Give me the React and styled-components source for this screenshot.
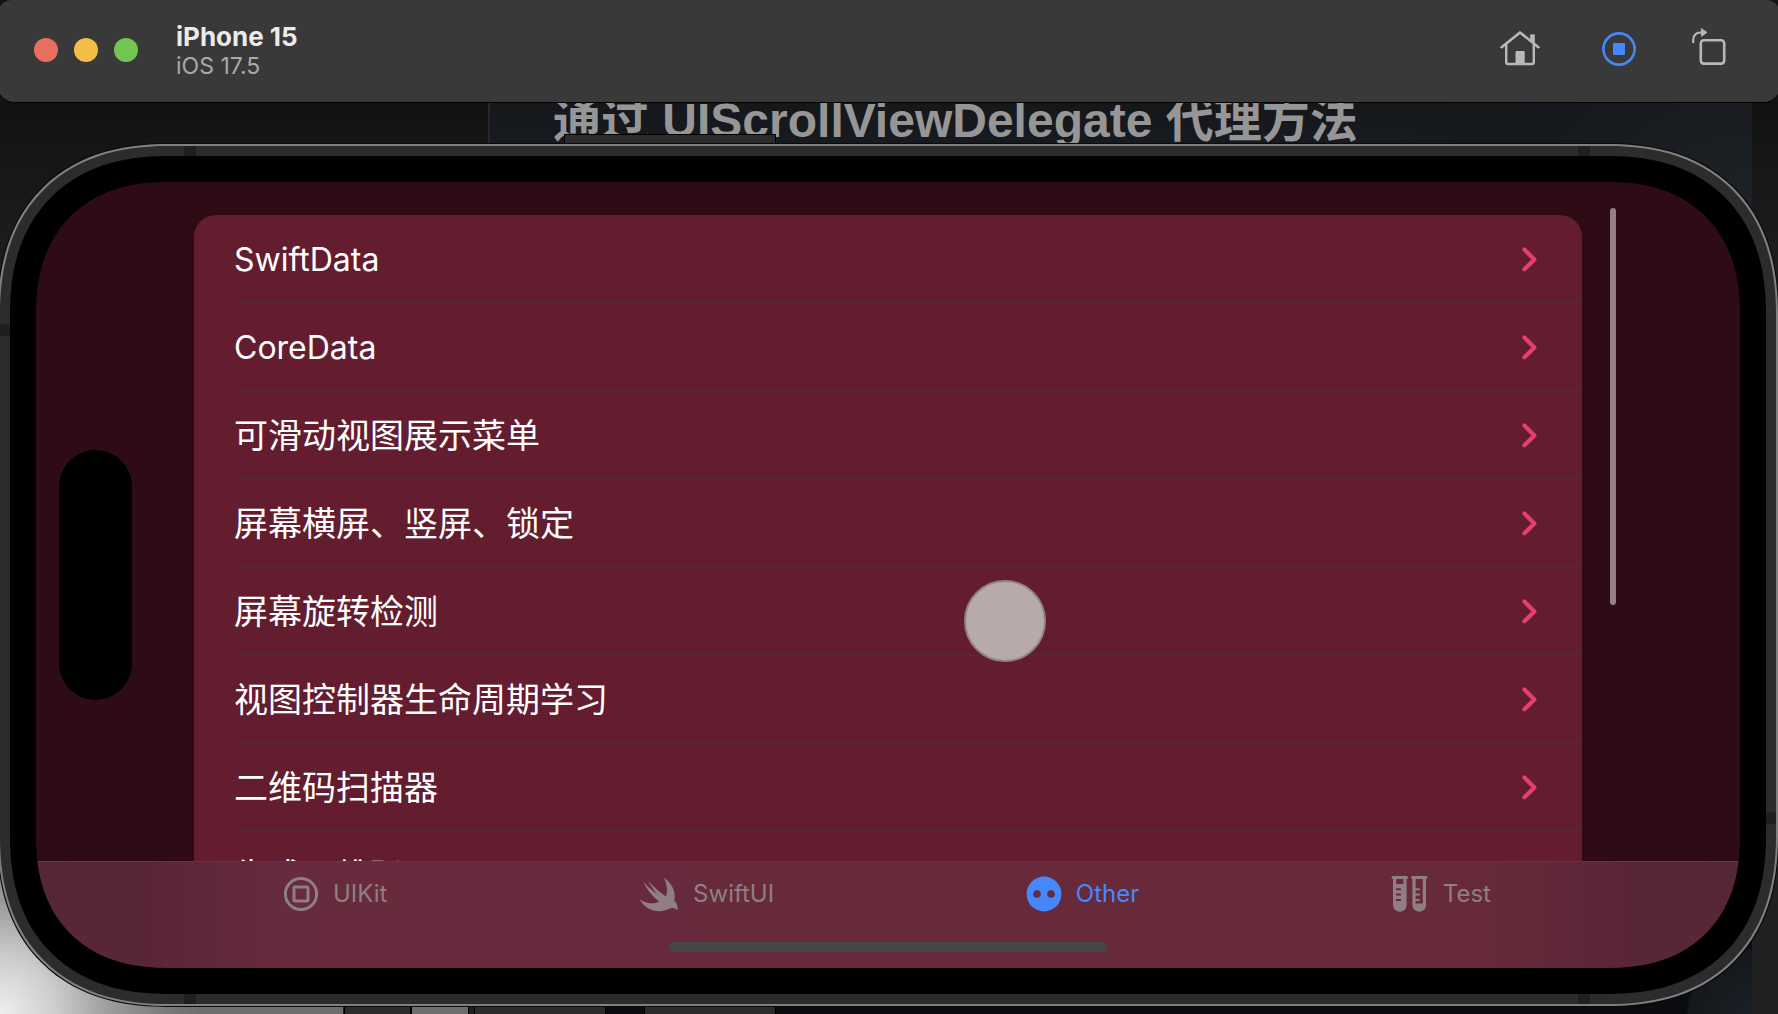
import React from "react";
import styled, { createGlobalStyle, css } from "styled-components";

const GlobalStyle = createGlobalStyle`
  *, *::before, *::after { box-sizing: border-box; }
  html, body { margin: 0; background: #141414; }
  body {
    font-family: Inter, "Noto Sans CJK SC", sans-serif;
    overflow: hidden;
  }
  button { border: 0; padding: 0; background: none; font: inherit; color: inherit; }
  svg { display: block; overflow: visible; }
`;

const Page = styled.div`
  display: flex;
  flex-direction: column;
  height: 100vh;
  overflow: hidden;
  background: #141414;
`;

const TitleBar = styled.header`
  display: flex;
  align-items: center;
  height: 102px;
  flex: none;
  margin: 0 -2px;
  padding: 0 55px 2px 36px;
  background: #393939;
  border-radius: 14px 14px 16px 16px;
  box-shadow: 0 1px 0 #000;
  position: relative;
  z-index: 1;
`;

const Lights = styled.div`
  display: flex;
  gap: 16px;
  margin-right: 38px;
`;

const Light = styled.button`
  width: 24px;
  height: 24px;
  border-radius: 50%;
  background: ${(p) => p.$color};
`;

const Titles = styled.div`
  flex: 1;
  padding-top: 2px;
`;

const DeviceName = styled.h1`
  margin: 0;
  font-size: 26px;
  line-height: 30px;
  font-weight: 700;
  color: #ebebeb;
`;

const DeviceOs = styled.p`
  margin: 0;
  font-size: 23px;
  line-height: 28px;
  color: #a9a9a9;
`;

const Tools = styled.div`
  display: flex;
  align-items: center;
  gap: 54px;
  padding-bottom: 4px;
`;

const ToolButton = styled.button`
  display: flex;
  justify-content: center;
  width: ${(p) => p.$width}px;
  height: 40px;
  color: ${(p) => (p.$active ? "#4688fb" : "#b8b8b8")};
`;

const Desktop = styled.main`
  position: relative;
  flex: 1;
  min-height: 0;
  display: flex;
  padding: 42px 0 8px;
  overflow: hidden;
`;

const Backdrop = styled.div`
  position: absolute;
  inset: 0;
  background: linear-gradient(#111 0, #151515 40px, #202020 200px);
`;

const Editor = styled.section`
  position: absolute;
  inset: 0 26px 0 488px;
  border-left: 2px solid #24272c;
  background:
    radial-gradient(circle at 100% 180px, #20262c 0, #15181c 260px, transparent 400px),
    radial-gradient(circle at 100% 100%, #1b2026 0, #14181c 63px, transparent 66px),
    linear-gradient(#15171b, #171a1f 40px, #0a0c10 200px);
`;

const EditorHeading = styled.h2`
  position: absolute;
  top: -9px;
  left: 63px;
  margin: 0;
  white-space: nowrap;
  font-family: "Liberation Sans", "Noto Sans CJK SC", sans-serif;
  font-size: 48px;
  line-height: 56px;
  font-weight: 700;
  color: #969696;
`;

const Paper = styled.div`
  position: absolute;
  left: 0;
  bottom: 0;
  width: 343px;
  height: 250px;
  background: radial-gradient(
    circle at 0 100%,
    #efefef 0,
    #cecece 55px,
    #9c9c9c 110px,
    #787878 170px,
    #6e6e6e 200px
  );
`;

const BackWindow = styled.div`
  position: absolute;
  left: ${(p) => p.$left}px;
  width: ${(p) => p.$width}px;
  height: 9px;
  background: ${(p) => p.$color || "#2c2c2c"};
  border: solid #000;
  border-width: 0 1px;
  ${(p) =>
    p.$top
      ? css`
          top: 32px;
          border-top-width: 1px;
        `
      : css`
          bottom: 0;
        `}
`;

const Phone = styled.section`
  position: relative;
  flex: 1;
  min-width: 0;
  display: flex;
  margin-left: -2px;
  padding: 10px;
  border: 2px solid #808080;
  background: #2c2c2c;
  border-radius: 158px;
  box-shadow: 0 0 0 1px #0a0a0a;
  @supports (corner-shape: squircle) {
    border-radius: 170px;
    corner-shape: superellipse(1.2);
  }
`;

const Antenna = styled.span`
  position: absolute;
  background: #1f1f1f;
  ${(p) =>
    p.$side === "left" || p.$side === "right"
      ? css`
          width: 10px;
          height: 12px;
          ${p.$side}: 0;
        `
      : css`
          width: 12px;
          height: 10px;
          ${p.$side}: 0;
        `}
  ${(p) => p.$from}: ${(p) => p.$at}px;
`;

const Bezel = styled.div`
  position: relative;
  flex: 1;
  min-width: 0;
  display: flex;
  padding: 26px;
  background: #000;
  border-radius: 146px;
  @supports (corner-shape: squircle) {
    border-radius: 158px;
    corner-shape: superellipse(1.2);
  }
`;

const Screen = styled.div`
  position: relative;
  flex: 1;
  min-width: 0;
  display: flex;
  flex-direction: column;
  overflow: hidden;
  background: #2f0c15;
  border-radius: 120px;
  @supports (corner-shape: squircle) {
    border-radius: 132px;
    corner-shape: superellipse(1.2);
  }
`;

const ListArea = styled.div`
  flex: 1;
  min-height: 0;
  padding: 33px 158px 0;
  overflow: hidden;
`;

const Card = styled.ul`
  margin: 0;
  padding: 1px 0 0 40px;
  list-style: none;
  background: #641d2e;
  border-radius: 22px;
`;

const Row = styled.li`
  height: 88px;
  border-bottom: 2px solid #592538;
`;

const RowLink = styled.a`
  display: flex;
  align-items: center;
  justify-content: space-between;
  height: 100%;
  padding: 2px 44px 0 0;
  color: #fff;
  text-decoration: none;
  font-size: ${(p) => (p.$latin ? 32 : 34)}px;
  line-height: 44px;
  white-space: nowrap;
`;

const Island = styled.div`
  position: absolute;
  left: 23px;
  top: 50%;
  width: 73px;
  height: 250px;
  margin-top: -125px;
  border-radius: 37px;
  background: #000;
`;

const ScrollThumb = styled.div`
  position: absolute;
  top: 26px;
  right: 124px;
  width: 6px;
  height: 397px;
  border-radius: 3px;
  background: #948088;
`;

const TouchDot = styled.div`
  position: absolute;
  left: 928px;
  top: 398px;
  width: 82px;
  height: 82px;
  border-radius: 50%;
  border: 2px solid #8f8587;
  background: #b8a9ab;
`;

const TabBar = styled.nav`
  flex: none;
  display: flex;
  flex-direction: column;
  align-items: center;
  justify-content: space-between;
  height: 107px;
  padding-bottom: 16px;
  border-top: 1px solid #6c3144;
  background: linear-gradient(90deg, #572635 0, #5a2636 7%, #672b3e 15%, #672a3b 50%, #672a3b 84%, #5a2636 93%, #572635 100%);
`;

const Tabs = styled.div`
  display: flex;
  justify-content: space-between;
  width: 100%;
  padding: 12px 249px 0 247px;
`;

const Tab = styled.button`
  display: flex;
  align-items: center;
  gap: 14px;
  height: 40px;
  font-size: 24px;
  line-height: 32px;
  color: ${(p) => (p.$active ? "#4688fb" : "#8f7f84")};
`;

const HomeIndicator = styled.div`
  width: 438px;
  height: 10px;
  border-radius: 5px;
  background: #474747;
`;

const HomeIcon = () => (
  <svg width="40" height="40" viewBox="0 0 40 40" fill="none" stroke="currentColor" strokeLinecap="round" strokeLinejoin="round">
    <path d="M1.6 19.2 20 4.4 38.4 19.2" strokeWidth="2.6" />
    <path d="M6.2 17v17a2 2 0 0 0 2 2h23.6a2 2 0 0 0 2-2V17" strokeWidth="2.4" />
    <path d="M30.8 6.8h3.6v9.6l-3.6-3z" fill="currentColor" strokeWidth="0.8" />
    <path d="M16.5 23h7.2a1 1 0 0 1 1 1v12h-9.2V24a1 1 0 0 1 1-1z" fill="currentColor" stroke="none" />
  </svg>
);

const StopIcon = () => (
  <svg width="40" height="40" viewBox="0 0 40 40" fill="none">
    <circle cx="20" cy="21" r="15.6" stroke="currentColor" strokeWidth="2.6" />
    <rect x="14" y="15" width="12" height="12" rx="1" fill="currentColor" />
  </svg>
);

const RotateIcon = () => (
  <svg width="32" height="40" viewBox="5 0 32 40" fill="none" stroke="currentColor">
    <rect x="12.8" y="12.2" width="23.4" height="23.4" rx="3" strokeWidth="2.6" />
    <path d="M5.2 14.2V11.5a7 7 0 0 1 7-7H14" strokeWidth="2.2" strokeLinecap="round" />
    <path d="M13.4.6 19 4.4l-5.6 4z" fill="currentColor" strokeWidth="0.8" strokeLinejoin="round" />
  </svg>
);

const Chevron = () => (
  <svg width="17" height="28" viewBox="0 0 17 28" fill="none" stroke="#e63d6d" strokeWidth="4.2" strokeLinecap="round" strokeLinejoin="round">
    <path d="M3.4 3.6 13.4 13.4 3.4 23.2" />
  </svg>
);

const UIKitIcon = () => (
  <svg width="36" height="36" viewBox="0 0 36 36" fill="none" stroke="currentColor">
    <circle cx="18" cy="18" r="15.6" strokeWidth="3" />
    <rect x="11" y="11" width="14" height="14" rx="1" strokeWidth="3" />
  </svg>
);

const SwiftIcon = () => (
  <svg width="40" height="36" viewBox="0 0 40 36" fill="currentColor">
    <path d="M24.6 1.4C33 7 37.3 16 35.4 24.6 38.4 28.2 39.2 32.4 38.2 34.6 36 31.4 33 31.4 30.4 32.8 21 37.6 7.6 35.4.6 23.4 7.4 27.6 15.4 28.6 20.2 25.6 13 20.2 8 13.6 4.6 6.2 9.6 11.6 14.6 15.6 18.2 18.2 14.6 13.8 11 8.8 9 5 14.6 10.8 21.2 16.6 27 20.4 29 13.8 28 7.6 24.6 1.4z" />
  </svg>
);

const OtherIcon = () => (
  <svg width="36" height="36" viewBox="0 0 36 36">
    <circle cx="18" cy="18" r="17.4" fill="currentColor" />
    <circle cx="11" cy="18" r="3.8" fill="#672a3b" />
    <circle cx="25" cy="18" r="3.8" fill="#672a3b" />
  </svg>
);

const TubesIcon = () => (
  <svg width="38" height="36" viewBox="0 0 38 36" fill="none" stroke="currentColor">
    <path d="M2 1.6h13.6M21.4 1.6H35" strokeWidth="3" strokeLinecap="round" />
    <path d="M3.6 2v27a5.2 5.2 0 0 0 10.4 0V2" strokeWidth="3.2" />
    <path d="M4 8h9.8v21a4.9 4.9 0 0 1-9.8 0z" fill="currentColor" stroke="none" />
    <path d="M5 13.2h5M5 18.6h5M5 24h5" stroke="#672a3b" strokeWidth="2" />
    <path d="M23 2v27a5.2 5.2 0 0 0 10.4 0V2" strokeWidth="3.2" />
    <path d="M23.4 27.4h9.8V30a4.9 4.9 0 0 1-9.8 0z" fill="currentColor" stroke="none" />
    <path d="M23.4 13.2h5.4M23.4 18.6h5.4M23.4 24h5.4" strokeWidth="2" />
  </svg>
);

const rows = [
  { text: "SwiftData", latin: true },
  { text: "CoreData", latin: true },
  { text: "可滑动视图展示菜单" },
  { text: "屏幕横屏、竖屏、锁定" },
  { text: "屏幕旋转检测" },
  { text: "视图控制器生命周期学习" },
  { text: "二维码扫描器" },
  { text: "生成二维码" },
];

const tabs = [
  { label: "UIKit", Icon: UIKitIcon },
  { label: "SwiftUI", Icon: SwiftIcon },
  { label: "Other", Icon: OtherIcon, active: true },
  { label: "Test", Icon: TubesIcon },
];

export default function App() {
  return (
    <>
      <GlobalStyle />
      <Page>
        <TitleBar>
          <Lights>
            <Light $color="#e66f5e" aria-label="Close" />
            <Light $color="#f1bf46" aria-label="Minimize" />
            <Light $color="#70c651" aria-label="Zoom" />
          </Lights>
          <Titles>
            <DeviceName>iPhone 15</DeviceName>
            <DeviceOs>iOS 17.5</DeviceOs>
          </Titles>
          <Tools>
            <ToolButton $width={50} aria-label="Home"><HomeIcon /></ToolButton>
            <ToolButton $width={40} $active aria-label="Stop recording"><StopIcon /></ToolButton>
            <ToolButton $width={32} aria-label="Rotate"><RotateIcon /></ToolButton>
          </Tools>
        </TitleBar>

        <Desktop>
          <Backdrop>
            <Editor>
              <EditorHeading lang="zh-CN">通过 UIScrollViewDelegate 代理方法</EditorHeading>
            </Editor>
            <Paper />
            <BackWindow $top $left={564} $width={212} />
            <BackWindow $left={344} $width={67} />
            <BackWindow $left={411} $width={58} $color="#6e6e6e" />
            <BackWindow $left={474} $width={132} />
            <BackWindow $left={644} $width={132} />
          </Backdrop>

          <Phone aria-label="iPhone 15">
            <Antenna $side="top" $from="left" $at={184} />
            <Antenna $side="top" $from="right" $at={186} />
            <Antenna $side="bottom" $from="left" $at={184} />
            <Antenna $side="bottom" $from="right" $at={186} />
            <Antenna $side="left" $from="top" $at={178} />
            <Antenna $side="right" $from="bottom" $at={180} />
            <Bezel>
              <Screen>
                <ListArea>
                  <Card lang="zh-CN">
                    {rows.map((r) => (
                      <Row key={r.text}>
                        <RowLink href="#" $latin={r.latin}>
                          {r.text}
                          <Chevron />
                        </RowLink>
                      </Row>
                    ))}
                  </Card>
                </ListArea>
                <TabBar>
                  <Tabs>
                    {tabs.map(({ label, Icon, active }) => (
                      <Tab key={label} $active={active}>
                        <Icon />
                        {label}
                      </Tab>
                    ))}
                  </Tabs>
                  <HomeIndicator />
                </TabBar>
                <Island />
                <ScrollThumb />
                <TouchDot />
              </Screen>
            </Bezel>
          </Phone>
        </Desktop>
      </Page>
    </>
  );
}
